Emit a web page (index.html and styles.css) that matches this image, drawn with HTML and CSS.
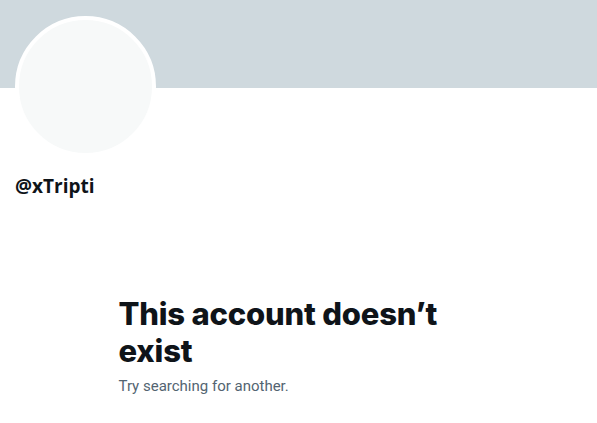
FILE: index.html
```html
<!DOCTYPE html>
<html lang="en">
<head>
  <meta charset="UTF-8" />
  <title>@xTripti</title>
  <link rel="stylesheet" href="styles.css">
</head>
<body>
  <div class="banner"></div>

  <div class="profile">
    <div class="avatar"></div>
    <div class="handle">@xTripti</div>
  </div>

  <div class="empty">
    <div class="empty-inner">
      <h2>This account doesn’t exist</h2>
      <p>Try searching for another.</p>
    </div>
  </div>
</body>
</html>
```

FILE: styles.css
```css
:root {
  --text: #0f1419;
  --muted: #536471;
  --banner: #cfd9de;
  --avatar: #f7f9f9;
}

* {
  box-sizing: border-box;
}

body {
  margin: 0;
  background: #ffffff;
  color: var(--text);
  font-family: "Open Sans", "Segoe UI", sans-serif;
}

.banner {
  height: 88px;
  background-color: var(--banner);
}

.profile {
  padding: 0 15px;
}

.avatar {
  width: 141px;
  height: 141px;
  margin-top: -72px;
  border: 4px solid #ffffff;
  border-radius: 50%;
  background-color: var(--avatar);
}

.handle {
  margin-top: 17px;
  font-size: 19px;
  font-weight: 700;
  line-height: 24px;
}

.empty {
  display: flex;
  justify-content: center;
  padding-top: 97px;
}

.empty-inner {
  width: 360px;
}

.empty h2 {
  margin: 0;
  font-family: Inter, sans-serif;
  font-size: 31px;
  font-weight: 800;
  line-height: 37px;
  letter-spacing: -0.2px;
}

.empty p {
  margin: 7px 0 0;
  color: var(--muted);
  font-family: Roboto, sans-serif;
  font-size: 15px;
  line-height: 20px;
}
```
